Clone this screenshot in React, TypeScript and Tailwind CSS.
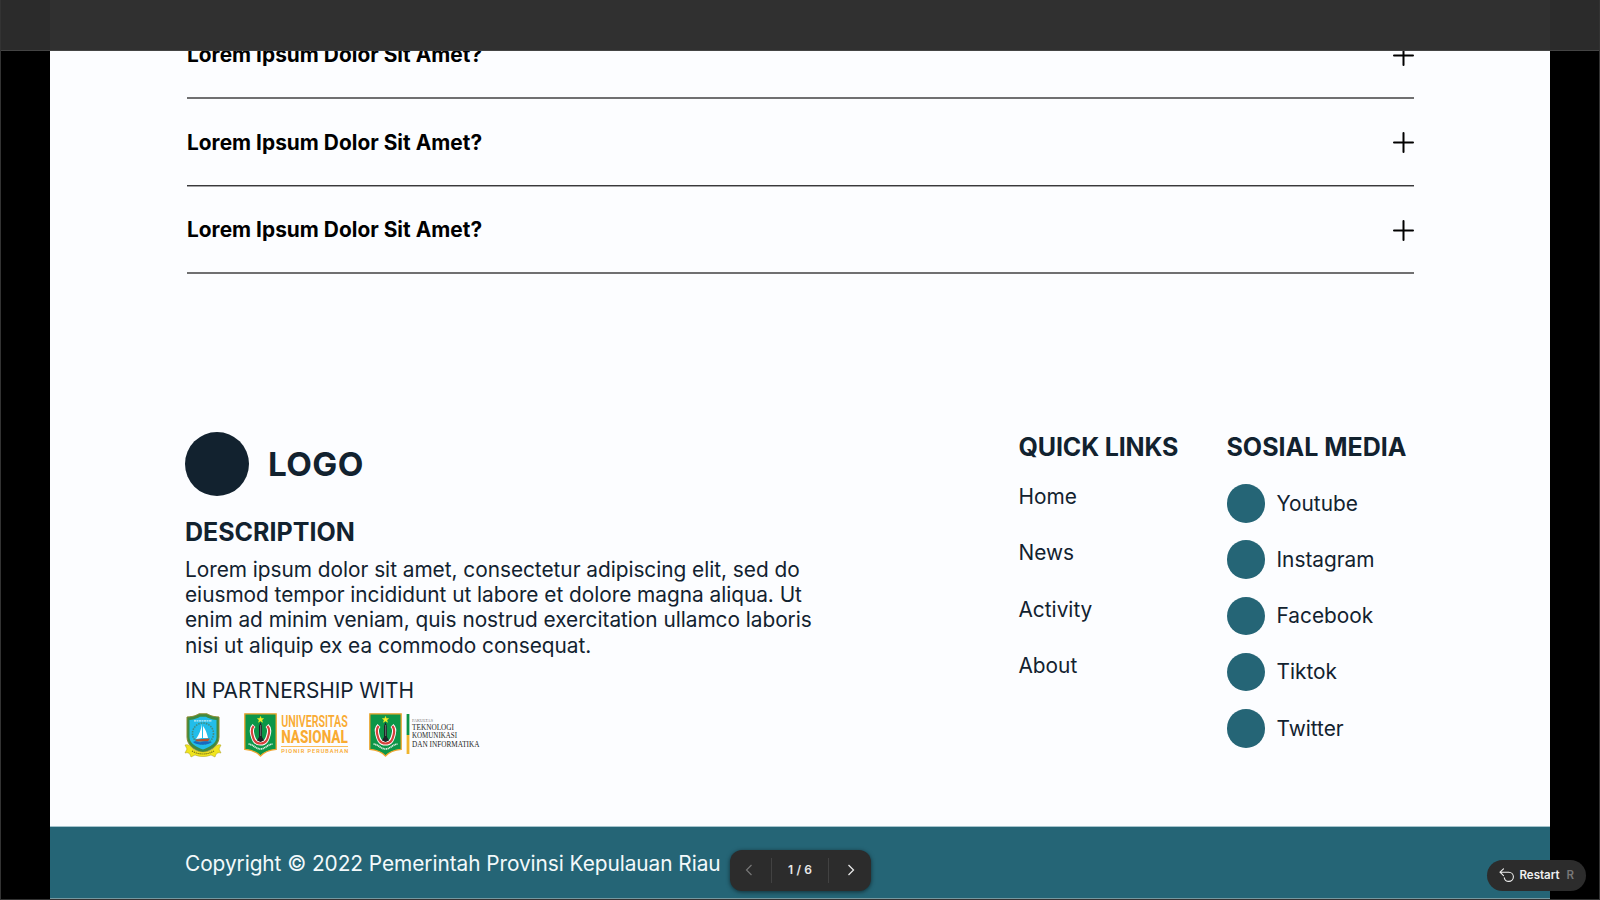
import { ReactNode } from 'react';

const socials = ['Youtube', 'Instagram', 'Facebook', 'Tiktok', 'Twitter'];
const links = ['Home', 'News', 'Activity', 'About'];

function FaqRow({ line }: { line: string }) {
  return (
    <div className="flex h-[87.5px] flex-col">
      <div className="flex flex-1 items-center justify-between pt-[3px]">
        <h3 className="text-[20.83px] leading-[26px] font-bold tracking-[0.035px] text-black">Lorem Ipsum Dolor Sit Amet?</h3>
        <svg className="h-[21px] w-[21px]" viewBox="0 0 21 21" stroke="#000" strokeWidth="2" strokeLinecap="round">
          <path d="M10.5 1v19M1 10.5h19" />
        </svg>
      </div>
      <div className={line} />
    </div>
  );
}

function RiauCrest() {
  return (
    <svg className="h-[45px] w-[38px]" viewBox="0 0 38 45">
      <path d="M3 4C9 4 13 2 15 0.8h8C25 2 29 4 35 4v20c0 8-7 13-16 16C10 37 3 32 3 24Z" fill="#3d8a43" stroke="#8c8a2c" strokeWidth="1" />
      <path d="M5.500 7C11 6.500 14 5 16 3.800h6C24 5 27 6.500 32.500 7v17c0 6-6 10-13.500 12.500C11.500 34 5.500 30 5.500 24Z" fill="#22bdea" />
      <path d="M10 7.800h18" stroke="#c5ecf5" strokeWidth="1.300" strokeDasharray="2 .5" />
      <circle cx="19" cy="20.500" r="10.500" fill="none" stroke="#3f8f86" strokeWidth="1.600" strokeDasharray="1.600 1" />
      <path d="M18 11v14l-6 1c3-4 5-9 6-15ZM19 13c3 4 4 8 5 12h-5Z" fill="#fff" />
      <path d="M11 26.500l15-1-2 3H13Z" fill="#b5502c" />
      <path d="M9 29c3-2 5 1 8 0s5-1 11 0c-3 3-15 4-19 0Z" fill="#1769c0" />
      <path d="M1 32c4-1 5 1 7 3 3 3 7 4 11 4s8-1 11-4c2-2 3-4 7-3l-2 4 2 4c-4-1-5 1-6 4l-4-2c-5 2-11 2-16 0l-4 2c-1-3-2-5-6-4l2-4Z" fill="#f1e51d" stroke="#a89c20" strokeWidth=".5" />
      <path d="M8 38c7 4 15 4 22 0" fill="none" stroke="#716c1a" strokeWidth="1.200" strokeDasharray="1.200 .8" />
    </svg>
  );
}

function UnasShield() {
  return (
    <svg className="h-[44px] w-[33px] shrink-0" viewBox="0 0 33 44">
      <path d="M.8.800h31.400v35.500c-6 .5-12 2.500-15.700 6.700C12.800 38.800 6.800 36.800.8 36.300Z" fill="#0c9648" stroke="#f0a52e" strokeWidth="1.300" />
      <path d="M16.500 3.400l.8 2.200h2.300l-1.800 1.400.7 2.300-2-1.400-2 1.400.7-2.300-1.800-1.400h2.300Z" fill="#f8ee24" stroke="#f8ee24" strokeWidth=".5" />
      <path d="M10 12.500C7.300 15 7.500 18 8.300 21c1 4 2 9.500 8.200 9.500s7.200-5.500 8.200-9.500c.8-3 1-6-1.700-8.500" fill="none" stroke="#fff" strokeWidth="4.200" />
      <path d="M9.700 13C7.500 15.500 7.500 18 8.200 21c1 4 2 9.500 8.300 9.500S23.800 25 24.800 21c.7-3 .7-5.500-1.500-8" fill="none" stroke="#d5413c" strokeWidth="2.200" />
      <path d="M16.500 9l1.500 4v11l2 3.500-3.500 1.500-3.500-1.500 2-3.500V13Z" fill="#1c2526" />
      <path d="M16.700 12v11" stroke="#8b9a96" strokeWidth=".7" />
      <path d="M4.500 31c5 .5 7.500 5 12 5s7-4.500 12-5" fill="none" stroke="#e6f2e8" strokeWidth="1.700" strokeDasharray="1.200 .5" />
    </svg>
  );
}

function Heading({ children }: { children: ReactNode }) {
  return <h2 className="text-[25px] leading-[30px] font-bold whitespace-nowrap">{children}</h2>;
}

function Footer() {
  return (
    <footer className="flex h-[394px] justify-between pr-[143.5px] pl-[135px] text-[20.83px] leading-[25.2px] text-[#12222f]">
      <div className="flex w-[650px] flex-col">
        <div className="flex items-center gap-[19.5px]">
          <div className="h-[63.5px] w-[63.5px] rounded-full bg-[#12222f]" />
          <span className="text-[33.3px] leading-[40px] font-bold tracking-[0.4px]">LOGO</span>
        </div>
        <div className="mt-[21.500px]">
          <Heading>DESCRIPTION</Heading>
        </div>
        <p className="mt-[10px] tracking-[-0.03px] whitespace-nowrap">
          Lorem ipsum dolor sit amet, consectetur adipiscing elit, sed do<br />
          eiusmod tempor incididunt ut labore et dolore magna aliqua. Ut<br />
          enim ad minim veniam, quis nostrud exercitation ullamco laboris<br />
          nisi ut aliquip ex ea commodo consequat.
        </p>
        <p className="mt-[20px] tracking-[-0.08px]">IN PARTNERSHIP WITH</p>
        <div className="mt-[10px] -ml-px flex items-start">
          <RiauCrest />
          <div className="ml-[22px] flex gap-[3px]">
            <UnasShield />
            <svg className="h-[44px] w-[70px]" viewBox="0 0 70 44" fill="#f9ab33" fontFamily="Roboto, sans-serif">
              <text x="1.200" y="13.900" fontSize="16" fontWeight="600" textLength="66.500" lengthAdjust="spacingAndGlyphs">UNIVERSITAS</text>
              <text x="1.200" y="30.300" fontSize="18" fontWeight="800" textLength="66.500" lengthAdjust="spacingAndGlyphs">NASIONAL</text>
              <path d="M1 33.500h67" stroke="#f9ab33" strokeWidth=".8" />
              <text x="1.200" y="40.200" fontSize="5.600" fontWeight="600" textLength="67" lengthAdjust="spacing">PIONIR PERUBAHAN</text>
            </svg>
          </div>
          <div className="ml-[19px] flex gap-[4px]">
            <UnasShield />
            <svg className="h-[44px] w-[76px]" viewBox="0 0 76 44" fill="#231f24" fontFamily="Liberation Serif, serif">
              <path d="M2 1v21" stroke="#0c9648" strokeWidth="2.800" />
              <path d="M2 22v19" stroke="#f0b52e" strokeWidth="2.800" />
              <text x="6" y="8.800" fontSize="4.500" fill="#777" textLength="21" lengthAdjust="spacingAndGlyphs">FAKULTAS</text>
              <text x="6" y="17.300" fontSize="7.300" textLength="42" lengthAdjust="spacingAndGlyphs">TEKNOLOGI</text>
              <text x="6" y="25.400" fontSize="7.300" textLength="45" lengthAdjust="spacingAndGlyphs">KOMUNIKASI</text>
              <text x="6" y="33.600" fontSize="7.300" textLength="67.500" lengthAdjust="spacingAndGlyphs">DAN INFORMATIKA</text>
            </svg>
          </div>
        </div>
      </div>
      <div className="flex gap-[48px]">
        <div className="w-[160px]">
          <div className="tracking-[-0.15px]">
            <Heading>QUICK LINKS</Heading>
          </div>
          <ul className="mt-[22px] flex flex-col gap-[31.1px]">
            {links.map((l) => (
              <li key={l}>{l}</li>
            ))}
          </ul>
        </div>
        <div className="w-[180px]">
          <Heading>SOSIAL MEDIA</Heading>
          <ul className="mt-[22px] flex flex-col gap-[17.75px]">
            {socials.map((s) => (
              <li key={s} className="flex h-[38.5px] items-center gap-[11.5px]">
                <span className="h-[38.5px] w-[38.5px] rounded-full bg-[#256576]" />
                {s}
              </li>
            ))}
          </ul>
        </div>
      </div>
    </footer>
  );
}

export default function App() {
  return (
    <div className="relative h-[900px] w-[1600px] overflow-hidden border-x border-b border-[#333] bg-black font-['Inter',sans-serif]">
      <main className="mx-auto flex h-[899px] w-[1500px] flex-col bg-[#fcfdff] pt-[11px]">
        <section className="h-[421px] pr-[136px] pl-[137px]">
          <FaqRow line="h-[2px] bg-[#707071]" />
          <FaqRow line="relative top-[0.5px] h-[2px] border-t border-b border-t-[#39393b] border-b-[#a3a3a5]" />
          <FaqRow line="h-[2px] bg-[#707071]" />
        </section>
        <Footer />
        <div className="flex h-[73px] items-center border-t border-b border-t-[#a5c4cd] border-b-[#76989f] bg-[#256576] pt-[2px] pl-[135px] text-[20.83px] leading-[25.2px] tracking-[-0.055px] text-[#f3f9fb]">
          Copyright © 2022 Pemerintah Provinsi Kepulauan Riau
        </div>
      </main>

      <div className="absolute inset-x-0 top-0 flex h-[51px] border-b border-[#444] bg-[#2b2b2b]">
        <div className="ml-[49px] w-[1500px] bg-[#303030]" />
      </div>

      <nav className="absolute top-[849.500px] left-[729px] flex h-[41px] w-[141px] items-center rounded-[12px] bg-[#2c2c2c] text-[12px] font-semibold text-[#e8e8e8] shadow-[0_1px_4px_rgba(0,0,0,0.55)]">
        <button className="flex h-full w-[41px] items-center justify-center pr-[3px]" aria-label="Previous">
          <svg className="h-[12px] w-[8px]" viewBox="0 0 8 12" fill="none" stroke="#777" strokeWidth="1.200">
            <path d="M6.500 1l-5 5 5 5" />
          </svg>
        </button>
        <span className="h-[25px] w-px bg-[#424242]" />
        <span className="flex-1 text-center tracking-[0.1px]">1 / 6</span>
        <span className="h-[25px] w-px bg-[#424242]" />
        <button className="flex h-full w-[42px] items-center justify-center pl-px" aria-label="Next">
          <svg className="h-[12px] w-[8px]" viewBox="0 0 8 12" fill="none" stroke="#e8e8e8" strokeWidth="1.300">
            <path d="M1.500 1l5 5-5 5" />
          </svg>
        </button>
      </nav>

      <button className="absolute top-[860px] left-[1486px] flex h-[31px] w-[99px] items-center rounded-full bg-[#2c2c2c] pl-[12px] text-[11.500px] font-semibold text-[#f0f0f0]">
        <svg className="h-[15px] w-[15px]" viewBox="0 0 15 15" fill="none" stroke="#eee" strokeWidth="1.100" strokeLinecap="round" strokeLinejoin="round">
          <path d="M4.500 .800L1 4.200l3.500 3.400M1 4.200h8.800a4.600 4.600 0 0 1 0 9.200a4.600 4.600 0 0 1-4.500-3.600" />
        </svg>
        <span className="ml-[5.5px]">Restart</span>
        <span className="ml-[7px] text-[#777]">R</span>
      </button>
    </div>
  );
}
